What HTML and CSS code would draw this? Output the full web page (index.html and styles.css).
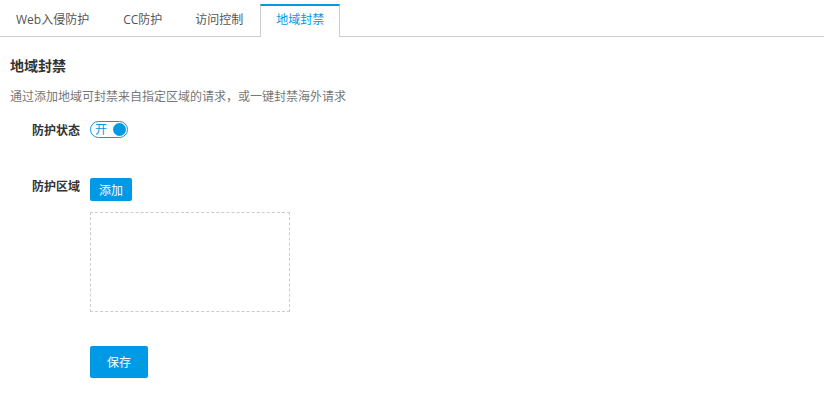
FILE: index.html
```html
<!DOCTYPE html>
<html lang="zh-CN">
<head>
<meta charset="utf-8">
<title>地域封禁</title>
<link rel="stylesheet" href="styles.css">
</head>
<body>
<div class="tabs">
  <div class="tab">Web入侵防护</div>
  <div class="tab">CC防护</div>
  <div class="tab">访问控制</div>
  <div class="tab active">地域封禁</div>
</div>
<div class="panel">
  <h2 class="title">地域封禁</h2>
  <p class="desc">通过添加地域可封禁来自指定区域的请求，或一键封禁海外请求</p>
  <div class="row row-status">
    <div class="label">防护状态</div>
    <div class="field">
      <span class="switch"><span class="switch-text">开</span><span class="knob"></span></span>
    </div>
  </div>
  <div class="row row-area">
    <div class="label">防护区域</div>
    <div class="field">
      <button class="btn btn-add">添加</button>
      <div class="area-box"></div>
      <button class="btn btn-save">保存</button>
    </div>
  </div>
</div>
</body>
</html>
```
FILE: styles.css
```css
* { box-sizing: border-box; }
body {
  margin: 0;
  background: #fff;
  font-family: "Open Sans", "Noto Sans CJK SC", sans-serif;
  color: #333;
}
.tabs {
  display: flex;
  margin-top: 4px;
  height: 33px;
  border-bottom: 1px solid #cccccc;
}
.tab {
  height: 32px;
  padding: 0 15px 0 15px;
  border: 1px solid transparent;
  border-top-width: 2px;
  font-size: 12px;
  line-height: 28px;
  color: #555;
  white-space: nowrap;
}
.tab:first-child { padding-right: 17px; }
.tab:nth-child(2), .tab:nth-child(3) { padding-right: 16px; }
.tab.active {
  height: 33px;
  border-color: #cccccc;
  border-top-color: #0099e6;
  border-bottom: none;
  background: #fff;
  color: #0099e6;
}
.panel {
  padding: 0 10px;
}
.title {
  margin: 19px 0 0;
  font-size: 14px;
  line-height: 20px;
  font-weight: bold;
  color: #333;
}
.desc {
  margin: 11px 0 0;
  font-size: 12px;
  line-height: 20px;
  color: #777;
}
.row {
  display: flex;
  align-items: flex-start;
}
.row-status { margin-top: 14px; }
.row-area { margin-top: 36px; }
.label {
  width: 70px;
  margin-right: 10px;
  text-align: right;
  font-size: 12px;
  line-height: 20px;
  font-weight: bold;
  color: #333;
}
.field {
  display: flex;
  flex-direction: column;
  align-items: flex-start;
}
.switch {
  display: flex;
  align-items: center;
  width: 38px;
  height: 17px;
  border: 1px solid #0099e6;
  border-radius: 9px;
  padding: 0 1px 0 4px;
  justify-content: space-between;
}
.switch-text {
  font-size: 12px;
  line-height: 15px;
  color: #0099e6;
}
.knob {
  width: 13px;
  height: 13px;
  border-radius: 50%;
  background: #0099e6;
}
.btn {
  border: none;
  border-radius: 2px;
  background: #0099e6;
  color: #fff;
  font-family: "Open Sans", "Noto Sans CJK SC", sans-serif;
  font-size: 12px;
  padding: 0;
  cursor: pointer;
}
.btn-add {
  margin-top: 1px;
  width: 42px;
  height: 23px;
}
.area-box {
  margin-top: 11px;
  width: 200px;
  height: 100px;
  border: 1px dashed #cccccc;
}
.btn-save {
  margin-top: 34px;
  width: 58px;
  height: 32px;
}
```
